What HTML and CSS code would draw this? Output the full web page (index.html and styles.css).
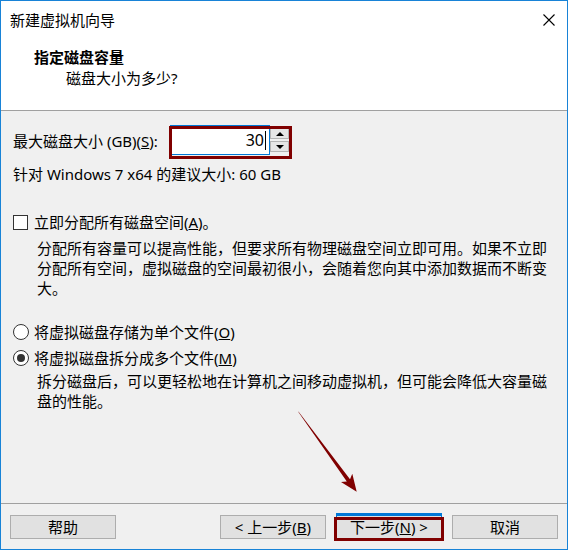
FILE: index.html
```html
<!DOCTYPE html>
<html lang="zh-CN">
<head>
<meta charset="utf-8">
<title>新建虚拟机向导</title>
<link rel="stylesheet" href="styles.css">
</head>
<body>
<div class="window">
  <div class="top">
    <div class="titlebar">
      <span class="title">新建虚拟机向导</span>
      <svg class="close" width="12" height="12" viewBox="0 0 12 12"><path d="M0.5 0.5 L11.5 11.5 M11.5 0.5 L0.5 11.5" stroke="#000" stroke-width="1.1" fill="none"/></svg>
    </div>
    <div class="heading">指定磁盘容量</div>
    <div class="subheading">磁盘大小为多少?</div>
  </div>
  <div class="content">
    <div class="size-row">
      <span class="size-label">最大磁盘大小 (GB)(<u>S</u>):</span>
      <div class="spin">
        <div class="edit">30<span class="caret"></span></div>
        <div class="updown">
          <div class="ud-btn"><span class="tri-up"></span></div>
          <div class="ud-btn"><span class="tri-down"></span></div>
        </div>
      </div>
    </div>
    <div class="hint">针对 Windows 7 x64 的建议大小: 60 GB</div>
    <div class="option check-row">
      <span class="checkbox"></span>
      <span>立即分配所有磁盘空间(<u>A</u>)。</span>
    </div>
    <div class="desc desc-alloc">分配所有容量可以提高性能，但要求所有物理磁盘空间立即可用。如果不立即<br>分配所有空间，虚拟磁盘的空间最初很小，会随着您向其中添加数据而不断变<br>大。</div>
    <div class="option radio-first">
      <span class="radio"></span>
      <span>将虚拟磁盘存储为单个文件(<u>O</u>)</span>
    </div>
    <div class="option radio-second">
      <span class="radio checked"></span>
      <span>将虚拟磁盘拆分成多个文件(<u>M</u>)</span>
    </div>
    <div class="desc desc-split">拆分磁盘后，可以更轻松地在计算机之间移动虚拟机，但可能会降低大容量磁<br>盘的性能。</div>
  </div>
  <div class="footer">
    <button class="btn">帮助</button>
    <button class="btn btn-prev">&lt; 上一步(<u>B</u>)</button>
    <button class="btn btn-next">下一步(<u>N</u>) &gt;</button>
    <button class="btn">取消</button>
  </div>
</div>
<svg class="arrow" width="570" height="551" viewBox="0 0 570 551">
  <polygon points="298,411.4 298.8,412 350,479.2 352.3,473.8 356.7,491.7 341,482.1 346.8,481.6" fill="#800000"/>
</svg>
</body>
</html>
```

FILE: styles.css
```css
html, body {
  margin: 0;
  padding: 0;
  background: #ffffff;
}

body {
  font-family: "Noto Sans", "Noto Sans CJK SC", sans-serif;
  font-size: 15px;
  line-height: 20px;
  color: #000;
  position: relative;
  width: 570px;
  height: 551px;
  overflow: hidden;
}

.window {
  width: 568px;
  height: 550px;
  box-sizing: border-box;
  border: 1px solid #1883d7;
  display: flex;
  flex-direction: column;
  background: #f0f0f0;
}

.top {
  height: 110px;
  box-sizing: border-box;
  background: #ffffff;
  border-bottom: 1px solid #a0a0a0;
}

.titlebar {
  height: 38px;
  display: flex;
  align-items: center;
  justify-content: space-between;
  padding: 0 12px 0 9px;
}

.title {
  font-size: 15px;
}

.close {
  display: block;
}

.heading {
  margin: 8px 0 0 33px;
  font-weight: bold;
}

.subheading {
  margin: 1px 0 0 65px;
}

.content {
  flex: 1;
  padding: 14px 0 0 12px;
}

.size-row {
  display: flex;
  align-items: center;
  height: 30px;
}

.size-label {
  width: 157px;
  padding-top: 2px;
}

.spin {
  position: relative;
  display: flex;
  height: 30px;
}

.spin::after {
  content: "";
  position: absolute;
  left: -1px;
  top: 1px;
  right: -3px;
  bottom: -4px;
  border: 3px solid #800000;
}

.edit {
  width: 100px;
  box-sizing: border-box;
  height: 30px;
  background: #fff;
  border: 1px solid #0078d7;
  text-align: right;
  padding: 3px 3px 0 0;
  line-height: 22px;
  font-size: 16px;
}

.caret {
  display: inline-block;
  width: 1px;
  height: 19px;
  background: #000;
  vertical-align: -4px;
  margin-left: 1px;
}

.updown {
  width: 19px;
  display: flex;
  flex-direction: column;
  gap: 2px;
  padding-top: 3px;
}

.ud-btn {
  height: 11px;
  box-sizing: border-box;
  background: #e6e6e6;
  border: 1px solid #b4b4b4;
  display: flex;
  align-items: center;
  justify-content: center;
}

.tri-up {
  width: 0;
  height: 0;
  border-left: 4px solid transparent;
  border-right: 4px solid transparent;
  border-bottom: 4px solid #000;
}

.tri-down {
  width: 0;
  height: 0;
  border-left: 4px solid transparent;
  border-right: 4px solid transparent;
  border-top: 4px solid #000;
}

.hint {
  margin-top: 9px;
}

.option {
  display: flex;
  align-items: center;
}

.check-row {
  margin-top: 28px;
}

.checkbox {
  width: 15px;
  height: 15px;
  box-sizing: border-box;
  border: 1px solid #333;
  background: #fff;
  margin-right: 6px;
}

.desc {
  margin-left: 24px;
}

.desc-alloc {
  margin-top: 6px;
}

.radio-first {
  margin-top: 24px;
}

.radio-second {
  margin-top: 6px;
}

.desc-split {
  margin-top: 3px;
}

.radio {
  width: 16px;
  height: 16px;
  box-sizing: border-box;
  border: 1px solid #333;
  border-radius: 50%;
  background: #fff;
  margin-right: 5px;
  display: flex;
  align-items: center;
  justify-content: center;
}

.radio.checked::after {
  content: "";
  width: 8px;
  height: 8px;
  border-radius: 50%;
  background: #333;
}

.footer {
  height: 46px;
  box-sizing: border-box;
  border-top: 1px solid #a0a0a0;
  padding: 11px 9px 0 9px;
  display: flex;
  align-items: flex-start;
  gap: 10px;
}

.btn {
  width: 106px;
  height: 24px;
  box-sizing: border-box;
  background: #e1e1e1;
  border: 1px solid #adadad;
  font-family: "Noto Sans", "Noto Sans CJK SC", sans-serif;
  font-size: 15px;
  line-height: 20px;
  color: #000;
  padding: 0;
  margin: 0;
}

.btn-prev {
  margin-left: auto;
}

.btn-next {
  position: relative;
  border-color: #0078d7;
  box-shadow: 0 -2px 0 #0078d7;
}

.btn-next::after {
  content: "";
  position: absolute;
  left: -3px;
  top: 1px;
  right: -3px;
  bottom: -3px;
  border: 3px solid #800000;
}

.arrow {
  position: absolute;
  left: 0;
  top: 0;
  pointer-events: none;
}
```
